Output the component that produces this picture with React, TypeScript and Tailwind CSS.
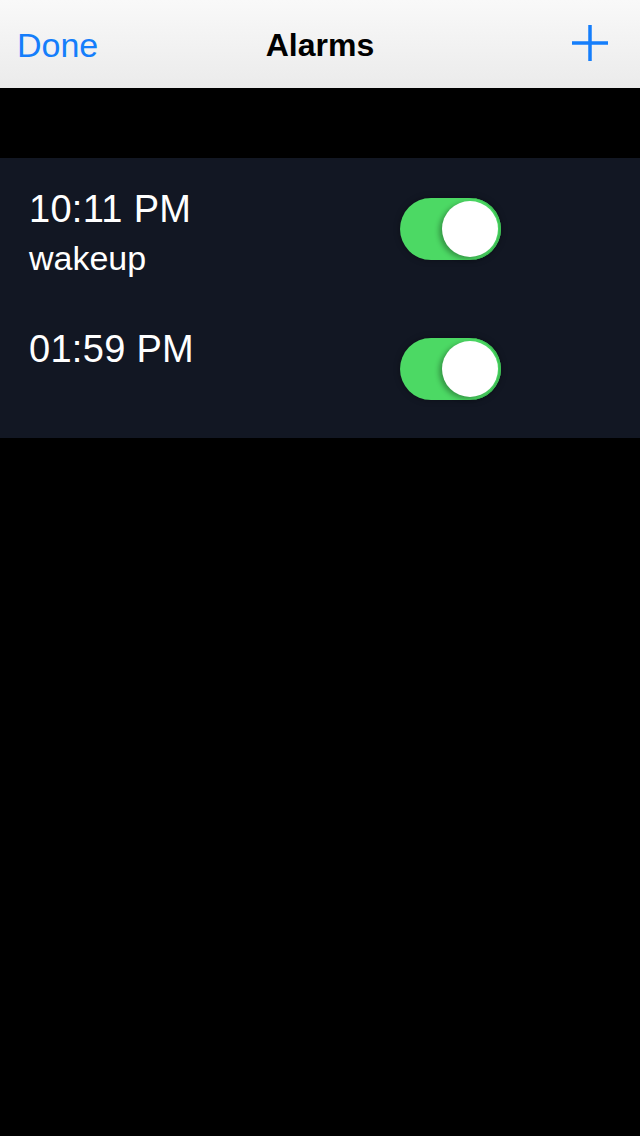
import React from "react";

function Toggle() {
  return (
    <div className="relative mt-[40px] h-[62px] w-[101px] shrink-0 rounded-full bg-[#4cd964] shadow-[0_0_6px_rgba(0,0,0,0.35),inset_-2px_0_0_#3fc156]">
      <div className="absolute right-[3px] top-[3px] h-[56px] w-[56px] rounded-full bg-white shadow-[-3px_2px_5px_rgba(0,0,0,0.3)]" />
    </div>
  );
}

function Row({ time, label }: { time: string; label?: string }) {
  return (
    <div className="flex h-[140px] pl-[29px]">
      <div className="w-[371px] shrink-0 pt-[29px] text-white">
        <div className="text-[38px] leading-[44px] tracking-[0.3px]">{time}</div>
        {label && <div className="mt-[7px] text-[34px] leading-[40px]">{label}</div>}
      </div>
      <Toggle />
    </div>
  );
}

export default function App() {
  return (
    <div
      className="flex h-[1136px] w-[640px] flex-col bg-black"
      style={{ fontFamily: '"Liberation Sans", Arial, sans-serif' }}
    >
      <div className="flex h-[88px] shrink-0 items-center justify-between bg-gradient-to-b from-[#f9f9f9] to-[#ebebeb] pt-[2px]">
        <div className="w-[150px] pl-[17px] text-[34px] leading-[40px] text-[#157efb]">Done</div>
        <div className="text-[32px] font-bold leading-[40px] text-black">Alarms</div>
        <div className="flex w-[150px] justify-end pr-[32px]">
          <svg width="36" height="36" viewBox="0 0 36 36" className="-mt-[4px]">
            <path d="M18 0V36M0 18H36" stroke="#157efb" strokeWidth="3.5" fill="none" />
          </svg>
        </div>
      </div>
      <div className="h-[70px] shrink-0" />
      <div className="bg-[#121723]">
        <Row time="10:11 PM" label="wakeup" />
        <Row time="01:59 PM" />
      </div>
    </div>
  );
}
